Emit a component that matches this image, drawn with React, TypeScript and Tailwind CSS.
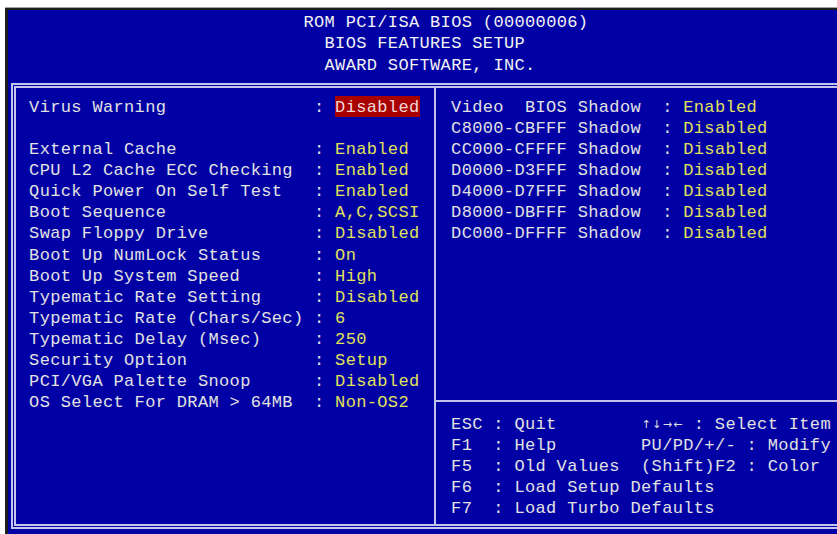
import React from "react";

// Award BIOS "BIOS FEATURES SETUP" text-mode screen, laid out on an 80x25 character grid.
// Cell: 10.55px wide (17px Liberation Mono + 0.35px tracking), 21.14px tall.

type Item = [string, string, boolean?] | null;

const LEFT: Item[] = [
  ["Virus Warning", "Disabled", true],
  null,
  ["External Cache", "Enabled"],
  ["CPU L2 Cache ECC Checking", "Enabled"],
  ["Quick Power On Self Test", "Enabled"],
  ["Boot Sequence", "A,C,SCSI"],
  ["Swap Floppy Drive", "Disabled"],
  ["Boot Up NumLock Status", "On"],
  ["Boot Up System Speed", "High"],
  ["Typematic Rate Setting", "Disabled"],
  ["Typematic Rate (Chars/Sec)", "6"],
  ["Typematic Delay (Msec)", "250"],
  ["Security Option", "Setup"],
  ["PCI/VGA Palette Snoop", "Disabled"],
  ["OS Select For DRAM > 64MB", "Non-OS2"],
];

const RIGHT: [string, string][] = [
  ["Video  BIOS Shadow", "Enabled"],
  ["C8000-CBFFF Shadow", "Disabled"],
  ["CC000-CFFFF Shadow", "Disabled"],
  ["D0000-D3FFF Shadow", "Disabled"],
  ["D4000-D7FFF Shadow", "Disabled"],
  ["D8000-DBFFF Shadow", "Disabled"],
  ["DC000-DFFFF Shadow", "Disabled"],
];

const ROW = "h-[21.14px] leading-[23px] whitespace-pre";
const VALUE = "text-[#e2e25a]";

function Arrows() {
  const glyphs = ["\u2191", "\u2193", "\u2192", "\u2190"];
  return (
    <span className="inline-flex align-top">
      {glyphs.map((g, i) => (
        <span
          key={i}
          className="inline-block w-[10.55px] text-center tracking-normal font-['DejaVu_Sans',sans-serif] text-[11px]"
        >
          {g}
        </span>
      ))}
    </span>
  );
}

export default function App() {
  return (
    <div className="w-[837px] h-[534px] overflow-hidden bg-white">
      <div className="pl-[5px] pt-[7px]">
        <div className="border-t border-t-[#a4a4a4]">
          <div className="w-[850px] h-[530px] border-t-2 border-l-[3px] border-[#1e1e1e] bg-[#0000a4] font-['Liberation_Mono',monospace] text-[17px] tracking-[0.35px] text-[#e2e2e2]">
            {/* title lines */}
            <div className="h-[73px] pt-[1.3px] text-[#f2f2f2]">
              <div className={ROW}>{" ".repeat(28) + "ROM PCI/ISA BIOS (00000006)"}</div>
              <div className={ROW}>{" ".repeat(30) + "BIOS FEATURES SETUP"}</div>
              <div className={ROW}>{" ".repeat(30) + "AWARD SOFTWARE, INC."}</div>
            </div>

            {/* double-line frame */}
            <div className="ml-[3px] w-[838px] h-[446px] border-2 border-[#c4c4ee] p-[1px]">
              <div className="h-full border-2 border-[#c4c4ee] flex">
                {/* settings column */}
                <div className="w-[418px] pl-[13.1px] pt-[7.7px] flex flex-col">
                  {LEFT.map((item, i) =>
                    item ? (
                      <div key={i} className={ROW}>
                        {item[0].padEnd(27) + ": "}
                        {item[2] ? (
                          <span className="inline-block align-top h-[21.14px] bg-[#a80000] text-[#f2dada]">
                            {item[1]}
                          </span>
                        ) : (
                          <span className={VALUE}>{item[1]}</span>
                        )}
                      </div>
                    ) : (
                      <div key={i} className="h-[21.14px]" />
                    )
                  )}
                </div>

                <div className="w-[2px] bg-[#c0c0ec]" />

                {/* shadow column + key help */}
                <div className="flex-1 flex flex-col">
                  <div className="h-[312px] pl-[15.1px] pt-[7.7px]">
                    {RIGHT.map(([label, value], i) => (
                      <div key={i} className={ROW}>
                        {label.padEnd(20) + ": "}
                        <span className={VALUE}>{value}</span>
                      </div>
                    ))}
                  </div>
                  <div className="h-[2px] bg-[#c0c0ec]" />
                  <div className="pl-[15.1px] pt-[10.8px]">
                    <div className={ROW}>
                      {"ESC : Quit".padEnd(18)}
                      <Arrows />
                      {" : Select Item"}
                    </div>
                    <div className={ROW}>{"F1  : Help".padEnd(18) + "PU/PD/+/- : Modify"}</div>
                    <div className={ROW}>{"F5  : Old Values".padEnd(18) + "(Shift)F2 : Color"}</div>
                    <div className={ROW}>{"F6  : Load Setup Defaults"}</div>
                    <div className={ROW}>{"F7  : Load Turbo Defaults"}</div>
                  </div>
                </div>
              </div>
            </div>
          </div>
        </div>
      </div>
    </div>
  );
}
